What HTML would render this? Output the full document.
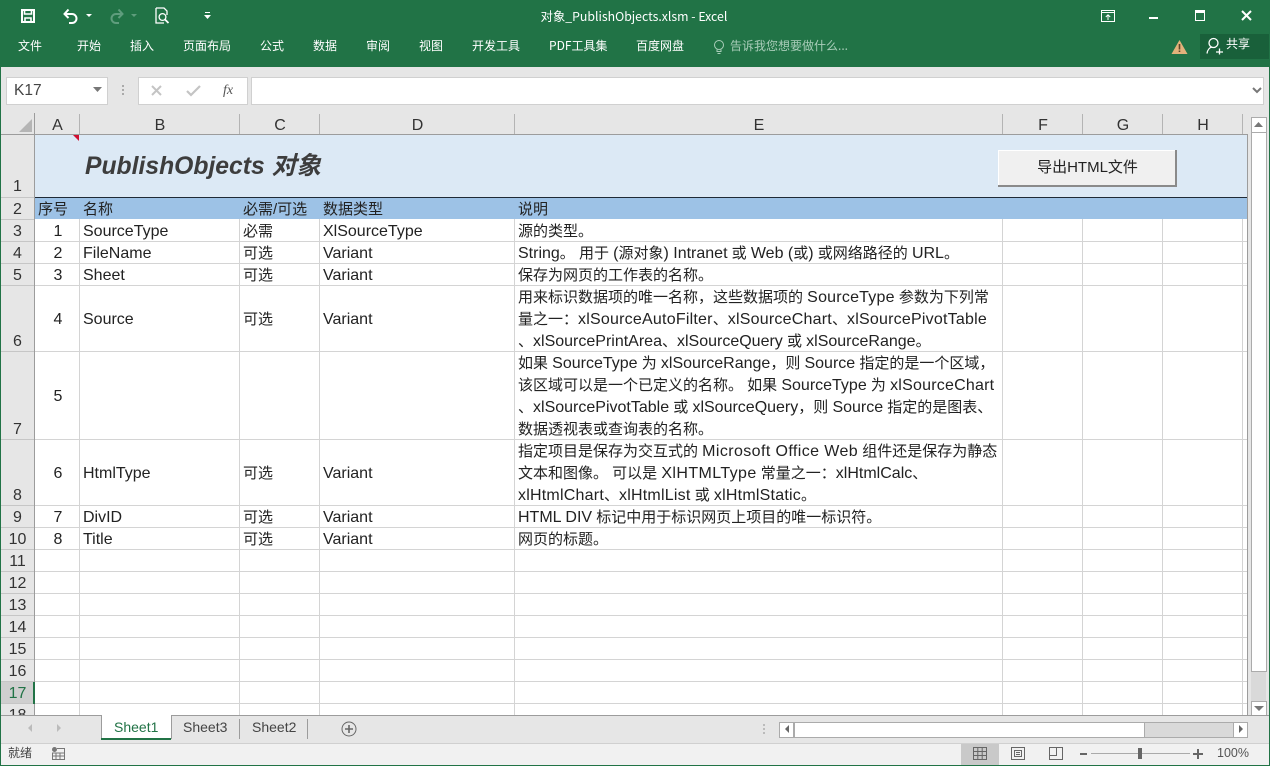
<!DOCTYPE html>
<html lang="zh"><head><meta charset="utf-8"><title>对象_PublishObjects.xlsm - Excel</title>
<style>
html,body{margin:0;padding:0;width:1270px;height:766px;overflow:hidden;background:#fff}
body{position:relative;font-family:"Liberation Sans","Noto Sans CJK SC",sans-serif;color:#262626}
div,span,svg{position:absolute}
b{font-weight:400;font-size:16px;position:static}
b.w{letter-spacing:.22px}
b.x{letter-spacing:.4px}
.r{color:#fff;font-size:12px;top:38px;line-height:16px;white-space:nowrap;font-family:"Noto Sans CJK SC","Liberation Sans",sans-serif}
.ch{top:114px;height:21px;line-height:24px;text-align:center;font-size:16px;color:#333;margin-left:.5px}
.rh{left:1px;width:33px;text-align:center;font-size:16px;color:#333;height:22px;line-height:24px}
.v{top:135px;width:1px;height:580px;background:#d4d4d4}
.hl{left:35px;width:1212px;height:1px;background:#d4d4d4}
.hs{left:1px;width:33px;height:1px;background:#c6c6c6}
.t{font-size:15px;line-height:24px;white-space:nowrap;color:#222;font-family:"Liberation Sans","Noto Sans CJK SC",sans-serif}
.c{text-align:center;left:36px;width:44px}
.tk{top:114px;width:1px;height:20px;background:#b4b4b4}
.s{color:#444;font-size:14px;line-height:18px;top:718px}
</style></head><body>
<div style="left:0;top:0;width:1270px;height:67px;background:#217346"></div>
<svg style="left:20px;top:8px" width="16" height="16" viewBox="0 0 16 16" fill="none" stroke="#fff" stroke-width="2"><path d="M2 2h12v12H2z"/><path d="M4.500 2v4h7V2M5 14v-4h6v4" stroke-width="1.600"/></svg>
<svg style="left:62px;top:7px" width="32" height="18" viewBox="0 0 32 18" fill="none" stroke="#fff" stroke-width="2"><path d="M3 7h7a4 4 0 0 1 0 9H7M6.500 2.500 2.500 7l4 4"/><path d="M24 7h6l-3 3z" fill="#fff" stroke="none"/></svg>
<svg style="left:107px;top:7px" width="32" height="18" viewBox="0 0 32 18" fill="none" stroke="#5f9d7d" stroke-width="2"><path d="M15 7H9a4 4 0 0 0 0 9h3M11.500 2.500l4 4.500-4 4"/><path d="M24 7h6l-3 3z" fill="#5f9d7d" stroke="none"/></svg>
<svg style="left:155px;top:7px" width="16" height="18" viewBox="0 0 16 18" fill="none" stroke="#fff" stroke-width="1.300"><path d="M1 1h8l3 3v4M1 1v15h8"/><circle cx="7.500" cy="10" r="3.400"/><path d="M10 12.500l3.500 3.500" stroke-width="1.800"/></svg>
<svg style="left:203px;top:12px" width="9" height="8" viewBox="0 0 9 8" fill="#fff"><path d="M2 0h5v1H2zM1 3h7L4.500 7z"/></svg>
<div style="left:0;top:8px;width:1268px;text-align:center;color:#fff;font-size:12.300px;line-height:17px;font-family:'Noto Sans CJK SC',sans-serif">对象_PublishObjects.xlsm - Excel</div>
<svg style="left:1101px;top:10px" width="14" height="13" viewBox="0 0 14 13" fill="none" stroke="#fff"><path d="M.5 .5h13v11H.5z"/><path d="M.5 2.500h13"/><path d="M7 10V5M4.800 7 7 4.800 9.200 7"/></svg>
<div style="left:1149px;top:17px;width:9px;height:2px;background:#fff"></div>
<svg style="left:1195px;top:10px" width="11" height="11" viewBox="0 0 11 11" fill="none" stroke="#fff"><path d="M.5 .5h9v10h-9z"/><path d="M.5 2h9" stroke-width="2"/></svg>
<svg style="left:1241px;top:10px" width="11" height="11" viewBox="0 0 11 11" stroke="#fff" stroke-width="2"><path d="M1 1l9 9M10 1l-9 9"/></svg>
<span class="r" style="left:18px">文件</span><span class="r" style="left:77px">开始</span><span class="r" style="left:130px">插入</span><span class="r" style="left:183px">页面布局</span><span class="r" style="left:260px">公式</span><span class="r" style="left:313px">数据</span><span class="r" style="left:366px">审阅</span><span class="r" style="left:419px">视图</span><span class="r" style="left:472px">开发工具</span><span class="r" style="left:549px">PDF工具集</span><span class="r" style="left:636px">百度网盘</span>
<svg style="left:713px;top:39px" width="12" height="16" viewBox="0 0 12 16" fill="none" stroke="#a9cdb9"><circle cx="6" cy="6" r="4.500"/><path d="M4 10.500v2h4v-2M4.500 14.500h3"/></svg>
<span class="r" style="left:730px;color:#a9cdb9">告诉我您想要做什么...</span>
<svg style="left:1171px;top:39px" width="17" height="16" viewBox="0 0 17 16"><path d="M8.500 1 16.500 15H.5z" fill="#e3b27b"/><path d="M7.700 5h1.600v5.500H7.700zM7.700 11.500h1.600V13H7.700z" fill="#5e4526"/></svg>
<div style="left:1200px;top:34px;width:69px;height:25px;background:#19603a"></div>
<svg style="left:1206px;top:37px" width="18" height="18" viewBox="0 0 18 18" fill="none" stroke="#fff" stroke-width="1.300"><circle cx="7.500" cy="6" r="4.500"/><path d="M1 16.500c.5-3.500 2.500-6 5-6.500M10 15h7M13.500 11.500v6"/></svg>
<span class="r" style="left:1226px;top:36px;color:#fff">共享</span>

<div style="left:1px;top:67px;width:1268px;height:648px;background:#e6e6e6"></div>
<div style="left:6px;top:77px;width:100px;height:26px;background:#fff;border:1px solid #d0d0d0"></div>
<div style="left:14px;top:82px;font-size:15.500px;line-height:18px;color:#444">K17</div>
<svg style="left:93px;top:87px" width="9" height="5"><path d="M0 0h9L4.500 5z" fill="#777"/></svg>
<div style="left:122px;top:85px;width:2px;height:2px;background:#aaa;box-shadow:0 4px #aaa,0 8px #aaa"></div>
<div style="left:138px;top:77px;width:108px;height:26px;background:#fff;border:1px solid #d0d0d0"></div>
<svg style="left:150px;top:85px" width="13" height="12" stroke="#c4c4c4" stroke-width="2"><path d="M2 1l9 9M11 1l-9 9"/></svg>
<svg style="left:186px;top:85px" width="15" height="12" fill="none" stroke="#c4c4c4" stroke-width="2.200"><path d="M1 6l4 4 9-9"/></svg>
<span style="left:223px;top:82px;font:italic 14px/18px 'Liberation Serif',serif;color:#555">fx</span>
<div style="left:251px;top:77px;width:1011px;height:26px;background:#fff;border:1px solid #d0d0d0"></div>
<svg style="left:1252px;top:87px" width="10" height="7" fill="none" stroke="#777" stroke-width="2"><path d="M1 1l4 4 4-4"/></svg>

<!-- sheet -->
<div style="left:1px;top:134px;width:33px;height:581px;background:#e6e6e6"></div>
<div style="left:35px;top:135px;width:1212px;height:580px;background:#fff"></div>
<div style="left:34px;top:113px;width:1px;height:602px;background:#9c9c9c"></div>
<div style="left:1px;top:134px;width:1246px;height:1px;background:#9c9c9c"></div>
<svg style="left:19px;top:119px" width="13" height="13"><path d="M13 0v13H0z" fill="#b5b5b5"/></svg>
<div class="ch" style="left:35px;width:44px">A</div><div class="ch" style="left:80px;width:159px">B</div><div class="ch" style="left:240px;width:79px">C</div><div class="ch" style="left:320px;width:194px">D</div><div class="ch" style="left:515px;width:487px">E</div><div class="ch" style="left:1003px;width:79px">F</div><div class="ch" style="left:1083px;width:79px">G</div><div class="ch" style="left:1163px;width:79px">H</div>
<div class="tk" style="left:79px"></div><div class="tk" style="left:239px"></div><div class="tk" style="left:319px"></div><div class="tk" style="left:514px"></div><div class="tk" style="left:1002px"></div><div class="tk" style="left:1082px"></div><div class="tk" style="left:1162px"></div><div class="tk" style="left:1242px"></div>

<div class="v" style="left:79px;top:219px;height:496px"></div><div class="v" style="left:239px;top:219px;height:496px"></div><div class="v" style="left:319px;top:219px;height:496px"></div><div class="v" style="left:514px;top:219px;height:496px"></div><div class="v" style="left:1002px;top:219px;height:496px"></div><div class="v" style="left:1082px;top:219px;height:496px"></div><div class="v" style="left:1162px;top:219px;height:496px"></div><div class="v" style="left:1242px;top:219px;height:496px"></div>
<div class="hl" style="top:241px"></div><div class="hl" style="top:263px"></div><div class="hl" style="top:285px"></div><div class="hl" style="top:351px"></div><div class="hl" style="top:439px"></div><div class="hl" style="top:505px"></div><div class="hl" style="top:527px"></div><div class="hl" style="top:549px"></div><div class="hl" style="top:571px"></div><div class="hl" style="top:593px"></div><div class="hl" style="top:615px"></div><div class="hl" style="top:637px"></div><div class="hl" style="top:659px"></div><div class="hl" style="top:681px"></div><div class="hl" style="top:703px"></div>
<div class="hs" style="top:197px"></div><div class="hs" style="top:219px"></div><div class="hs" style="top:241px"></div><div class="hs" style="top:263px"></div><div class="hs" style="top:285px"></div><div class="hs" style="top:351px"></div><div class="hs" style="top:439px"></div><div class="hs" style="top:505px"></div><div class="hs" style="top:527px"></div><div class="hs" style="top:549px"></div><div class="hs" style="top:571px"></div><div class="hs" style="top:593px"></div><div class="hs" style="top:615px"></div><div class="hs" style="top:637px"></div><div class="hs" style="top:659px"></div><div class="hs" style="top:681px"></div><div class="hs" style="top:703px"></div>

<div style="left:35px;top:135px;width:1212px;height:62px;background:#dce9f5"></div>
<div style="left:35px;top:197px;width:1212px;height:1px;background:#1f2a36"></div>
<div style="left:35px;top:198px;width:1212px;height:21px;background:#9dc2e6"></div>
<svg style="left:73px;top:135px" width="6" height="6"><path d="M0 0h6v6z" fill="#d01030"/></svg>
<div style="left:85px;top:151px;font:italic 700 24.700px/32px 'Liberation Sans','Noto Sans CJK SC',sans-serif;color:#3d3d3d;white-space:nowrap">PublishObjects 对象</div>
<div style="left:998px;top:150px;width:177px;height:35px;background:#f0f0f0;border-right:2px solid #8a8a8a;border-bottom:2px solid #8a8a8a;box-shadow:inset 1px 1px #fff"></div>
<div style="left:998px;top:158px;width:179px;text-align:center;font-size:15px;line-height:20px;color:#222">导出HTML文件</div>

<!-- row headers -->
<div class="rh" style="top:175px">1</div><div class="rh" style="top:198px">2</div><div class="rh" style="top:220px">3</div><div class="rh" style="top:242px">4</div><div class="rh" style="top:264px">5</div><div class="rh" style="top:330px">6</div><div class="rh" style="top:418px">7</div><div class="rh" style="top:484px">8</div><div class="rh" style="top:506px">9</div><div class="rh" style="top:528px">10</div><div class="rh" style="top:550px">11</div><div class="rh" style="top:572px">12</div><div class="rh" style="top:594px">13</div><div class="rh" style="top:616px">14</div><div class="rh" style="top:638px">15</div><div class="rh" style="top:660px">16</div>
<div style="left:1px;top:682px;width:33px;height:21px;background:#cfcfcf"></div><div class="rh" style="top:682px;color:#217346">17</div><div style="left:33px;top:682px;width:2px;height:22px;background:#217346"></div>
<div style="left:1px;top:704px;width:33px;height:11px;overflow:hidden"><div class="rh" style="left:0;top:0">18</div></div>

<!-- header row -->
<span class="t" style="left:38px;top:198px">序号</span><span class="t" style="left:83px;top:198px">名称</span><span class="t" style="left:243px;top:198px">必需/可选</span><span class="t" style="left:323px;top:198px">数据类型</span><span class="t" style="left:518px;top:198px">说明</span>
<!-- data -->
<div class="t c" style="top:220px"><b>1</b></div><div class="t c" style="top:242px"><b>2</b></div><div class="t c" style="top:264px"><b>3</b></div><div class="t c" style="top:308px"><b>4</b></div><div class="t c" style="top:385px"><b>5</b></div><div class="t c" style="top:462px"><b>6</b></div><div class="t c" style="top:506px"><b>7</b></div><div class="t c" style="top:528px"><b>8</b></div>
<span class="t" style="left:83px;top:220px"><b>SourceType</b></span><span class="t" style="left:83px;top:242px"><b>FileName</b></span><span class="t" style="left:83px;top:264px"><b>Sheet</b></span><span class="t" style="left:83px;top:308px"><b>Source</b></span><span class="t" style="left:83px;top:462px"><b>HtmlType</b></span><span class="t" style="left:83px;top:506px"><b>DivID</b></span><span class="t" style="left:83px;top:528px"><b>Title</b></span>
<span class="t" style="left:243px;top:220px">必需</span><span class="t" style="left:243px;top:242px">可选</span><span class="t" style="left:243px;top:264px">可选</span><span class="t" style="left:243px;top:308px">可选</span><span class="t" style="left:243px;top:462px">可选</span><span class="t" style="left:243px;top:506px">可选</span><span class="t" style="left:243px;top:528px">可选</span>
<span class="t" style="left:323px;top:220px"><b>XlSourceType</b></span><span class="t" style="left:323px;top:242px"><b>Variant</b></span><span class="t" style="left:323px;top:264px"><b>Variant</b></span><span class="t" style="left:323px;top:308px"><b>Variant</b></span><span class="t" style="left:323px;top:462px"><b>Variant</b></span><span class="t" style="left:323px;top:506px"><b>Variant</b></span><span class="t" style="left:323px;top:528px"><b>Variant</b></span>
<span class="t" style="left:518px;top:220px">源的类型。</span>
<span class="t" style="left:518px;top:242px"><b>String</b>。 用于 <b>(</b>源对象<b>) Intranet</b> 或 <b>Web (</b>或<b>)</b> 或网络路径的 <b>URL</b>。</span>
<span class="t" style="left:518px;top:264px">保存为网页的工作表的名称。</span>
<span class="t" style="left:518px;top:286px">用来标识数据项的唯一名称，这些数据项的 <b class="w">SourceType</b> 参数为下列常</span>
<span class="t" style="left:518px;top:308px">量之一：<b class="w">xlSourceAutoFilter</b>、<b class="w">xlSourceChart</b>、<b class="w">xlSourcePivotTable</b></span>
<span class="t" style="left:518px;top:330px">、<b>xlSourcePrintArea</b>、<b>xlSourceQuery</b> 或 <b>xlSourceRange</b>。</span>
<span class="t" style="left:518px;top:352px">如果 <b>SourceType</b> 为 <b>xlSourceRange</b>，则 <b>Source</b> 指定的是一个区域，</span>
<span class="t" style="left:518px;top:374px">该区域可以是一个已定义的名称。 如果 <b>SourceType</b> 为 <b class="w">xlSourceChart</b></span>
<span class="t" style="left:518px;top:396px">、<b>xlSourcePivotTable</b> 或 <b>xlSourceQuery</b>，则 <b>Source</b> 指定的是图表、</span>
<span class="t" style="left:518px;top:418px">数据透视表或查询表的名称。</span>
<span class="t" style="left:518px;top:440px">指定项目是保存为交互式的 <b class="x">Microsoft Office Web</b> 组件还是保存为静态</span>
<span class="t" style="left:518px;top:462px">文本和图像。 可以是 <b class="x">XlHTMLType</b> 常量之一：<b>xlHtmlCalc</b>、</span>
<span class="t" style="left:518px;top:484px"><b class="w">xlHtmlChart</b>、<b class="w">xlHtmlList</b> 或 <b class="w">xlHtmlStatic</b>。</span>
<span class="t" style="left:518px;top:506px"><b>HTML DIV</b> 标记中用于标识网页上项目的唯一标识符。</span>
<span class="t" style="left:518px;top:528px">网页的标题。</span>

<!-- vertical scrollbar -->
<div style="left:1247px;top:113px;width:22px;height:602px;background:#e6e6e6"></div>
<div style="left:1247px;top:134px;width:1px;height:581px;background:#9c9c9c"></div>
<div style="left:1251px;top:117px;width:15px;height:597px;background:#d9d9d9"></div>
<div style="left:1251px;top:117px;width:14px;height:14px;background:#fff;border:1px solid #ababab"></div>
<svg style="left:1254px;top:122px" width="9" height="5"><path d="M4.500 0 9 5H0z" fill="#777"/></svg>
<div style="left:1251px;top:132px;width:14px;height:538px;background:#fff;border:1px solid #ababab"></div>
<div style="left:1251px;top:701px;width:14px;height:13px;background:#fff;border:1px solid #ababab"></div>
<svg style="left:1254px;top:706px" width="10" height="5"><path d="M0 0h10L5 5z" fill="#777"/></svg>

<!-- tabs -->
<div style="left:1px;top:715px;width:1268px;height:29px;background:#e6e6e6;border-top:1px solid #9c9c9c;box-sizing:border-box"></div>
<svg style="left:28px;top:724px" width="4" height="8"><path d="M4 0v8L0 4z" fill="#bbb"/></svg>
<svg style="left:57px;top:724px" width="4" height="8"><path d="M0 0v8l4-4z" fill="#bbb"/></svg>
<div style="left:101px;top:715px;width:69px;height:24px;background:#fff;border-left:1px solid #9c9c9c;border-right:1px solid #9c9c9c"></div>
<div style="left:101px;top:738px;width:70px;height:2px;background:#217346"></div>
<span class="s" style="left:114px;color:#217346">Sheet1</span><span class="s" style="left:183px">Sheet3</span><span class="s" style="left:252px">Sheet2</span>
<div style="left:239px;top:719px;width:1px;height:20px;background:#9c9c9c"></div><div style="left:307px;top:719px;width:1px;height:20px;background:#9c9c9c"></div>
<svg style="left:341px;top:721px" width="16" height="16" fill="none" stroke="#666"><circle cx="8" cy="8" r="7"/><path d="M4 8h8M8 4v8" stroke-width="1.600"/></svg>
<div style="left:763px;top:724px;width:2px;height:2px;background:#bbb;box-shadow:0 4px #bbb,0 8px #bbb"></div>
<div style="left:779px;top:722px;width:467px;height:14px;background:#d9d9d9;border:1px solid #ababab"></div>
<div style="left:794px;top:722px;width:349px;height:14px;background:#fff;border:1px solid #ababab"></div>
<div style="left:779px;top:722px;width:13px;height:14px;background:#fff;border:1px solid #ababab"></div>
<svg style="left:785px;top:725px" width="4" height="8"><path d="M4 0v8L0 4z" fill="#666"/></svg>
<div style="left:1233px;top:722px;width:13px;height:14px;background:#fff;border:1px solid #ababab"></div>
<svg style="left:1239px;top:725px" width="4" height="8"><path d="M0 0v8l4-4z" fill="#666"/></svg>

<!-- status -->
<div style="left:1px;top:743px;width:1268px;height:22px;background:#f1f1f1;border-top:1px solid #d0d0d0;box-sizing:border-box"></div>
<span style="left:8px;top:745px;font-size:12px;line-height:16px;color:#444">就绪</span>
<svg style="left:52px;top:747px" width="13" height="13" fill="none" stroke="#777"><circle cx="2.500" cy="2.500" r="2" fill="#777"/><path d="M5 1.500h7.500v11H.5V6h12M.5 9h12M4 6v6.500M8 6v6.500"/></svg>
<div style="left:961px;top:744px;width:38px;height:21px;background:#c9c9c9"></div>
<svg style="left:973px;top:747px" width="14" height="13" fill="none" stroke="#666"><path d="M.5 .5h13v12H.5zM.5 4.500h13M.5 8.500h13M4.800 .5v12M9.200 .5v12"/></svg>
<svg style="left:1011px;top:747px" width="14" height="13" fill="none" stroke="#666"><path d="M.5 .5h13v12H.5zM3.500 3.500h7v6h-7z"/><path d="M5 5.500h4M5 7.500h4"/></svg>
<svg style="left:1049px;top:747px" width="14" height="13" fill="none" stroke="#666"><path d="M.5 .5h13v12H.5zM.5 8.500h7V.5"/></svg>
<div style="left:1080px;top:753px;width:7px;height:2px;background:#666"></div>
<div style="left:1091px;top:753px;width:99px;height:1px;background:#aaa"></div>
<div style="left:1138px;top:748px;width:4px;height:11px;background:#666"></div>
<svg style="left:1193px;top:749px" width="10" height="10" stroke="#666" stroke-width="2"><path d="M0 5h10M5 0v10"/></svg>
<span style="left:1217px;top:745px;font-size:12.500px;line-height:16px;color:#555">100%</span>

<div style="left:0;top:67px;width:1px;height:699px;background:#217346"></div>
<div style="left:1269px;top:67px;width:1px;height:699px;background:#217346"></div>
<div style="left:0;top:765px;width:1270px;height:1px;background:#217346"></div>
</body></html>
